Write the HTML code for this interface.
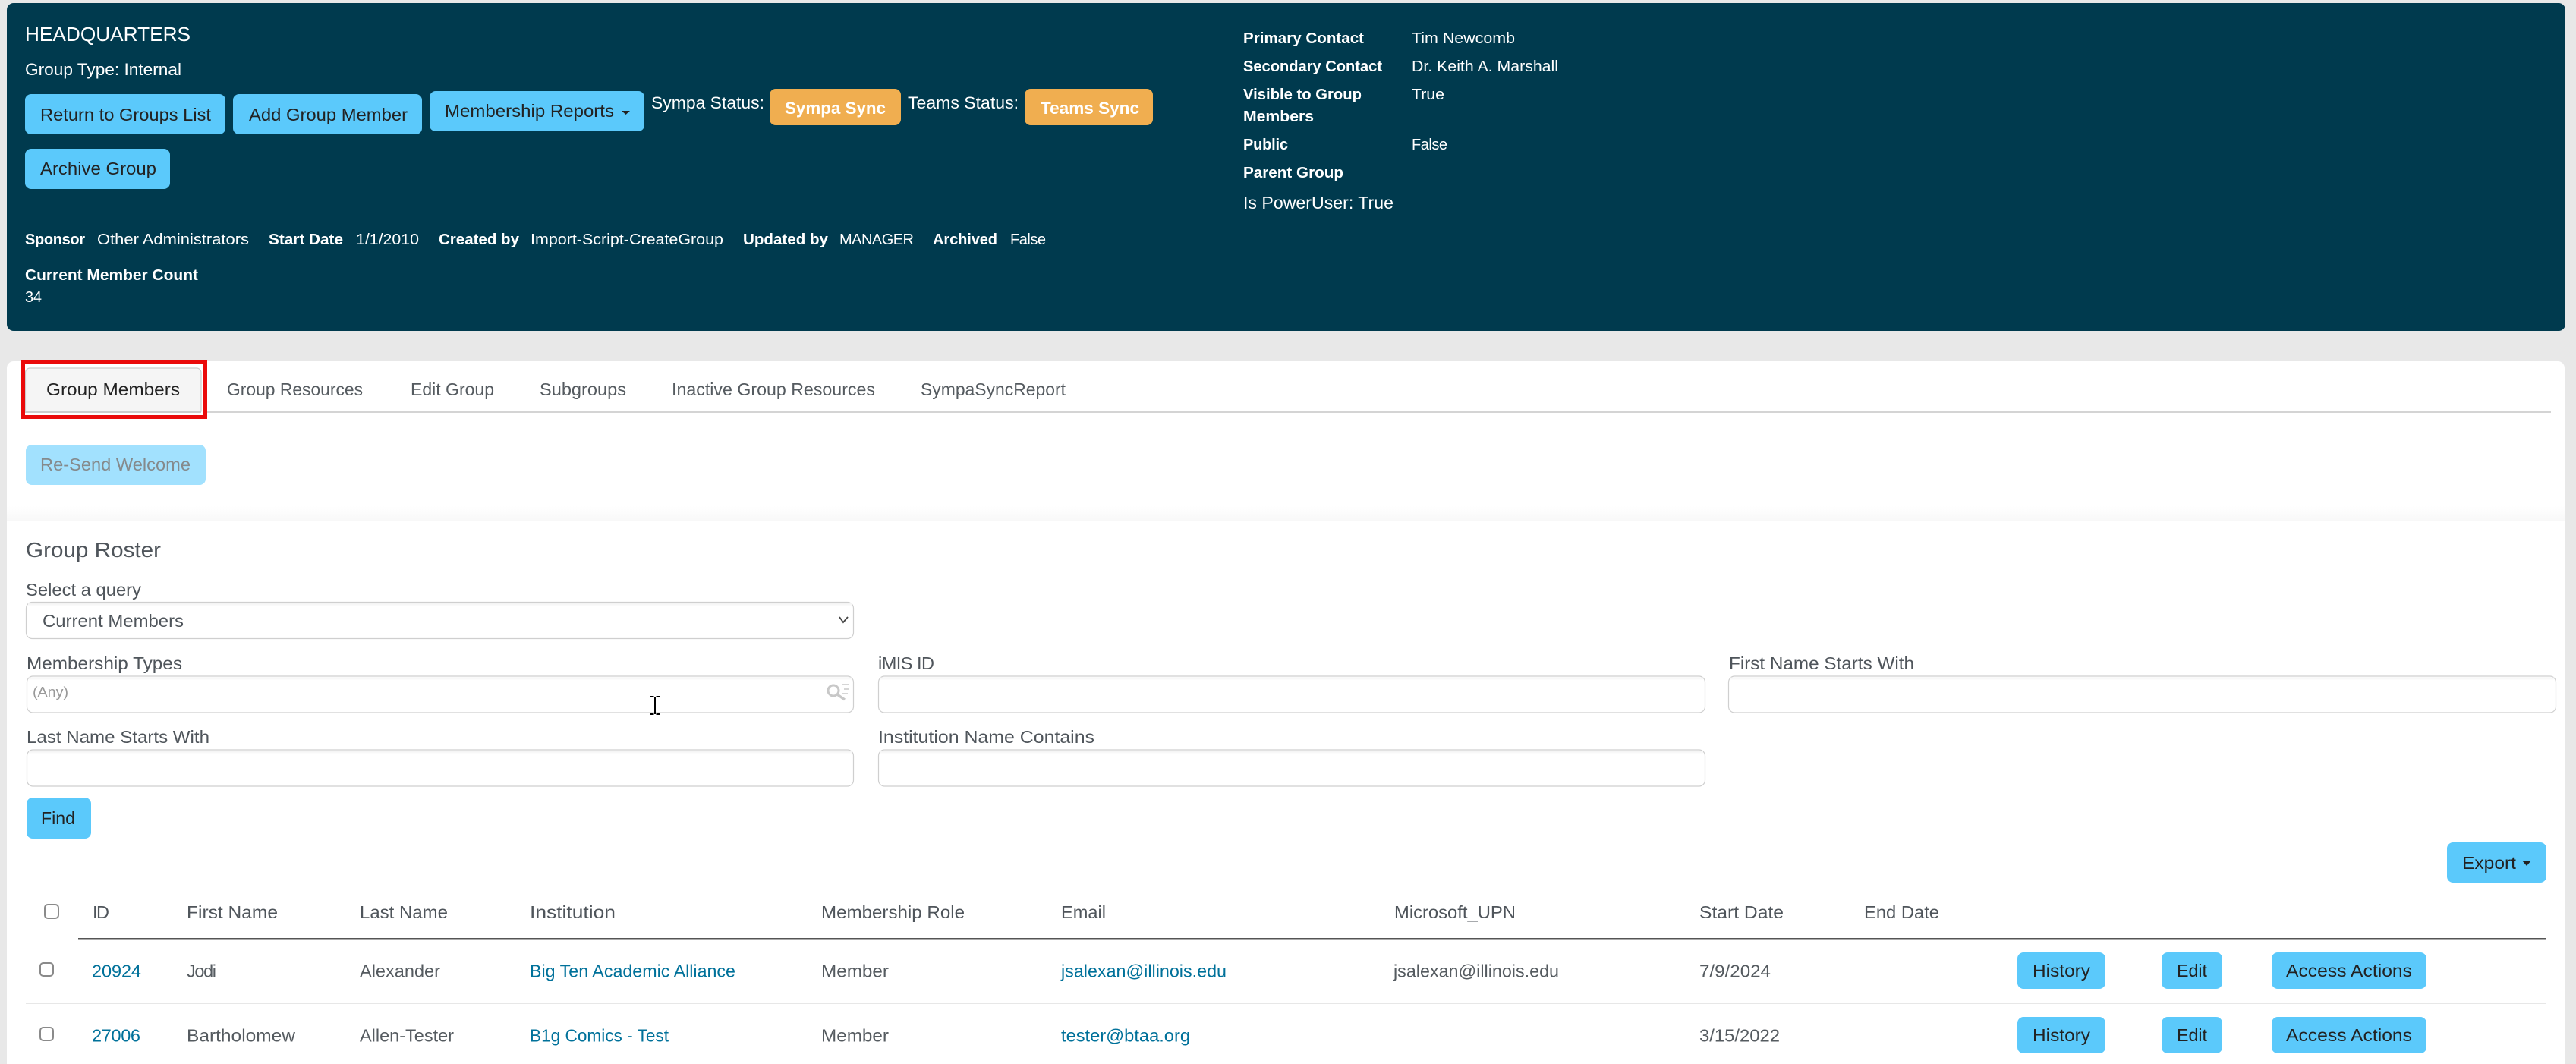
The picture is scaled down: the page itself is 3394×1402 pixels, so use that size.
<!DOCTYPE html>
<html lang="en">
<head>
<meta charset="utf-8">
<title>Headquarters - Group Members</title>
<style>
html,body{margin:0;padding:0;background:#e8e8e8;width:3394px;height:1402px;overflow:hidden}
svg{display:block}
text{font-family:"Liberation Sans",sans-serif;font-size:23.5px;fill:#555b60}
.w{fill:#fff;font-size:22.5px}
.m{font-size:20px;fill:#fff}
.b{font-size:20px;fill:#fff;font-weight:bold}
.k{fill:#222;font-size:23px}
.o{fill:#fff;font-weight:bold;font-size:22px}
.l{fill:#4f555b}
.h{fill:#4f555b}
.a{fill:#00719a}
.d{fill:#555b60}
.btn{fill:#5bc9fb}
.org{fill:#f0ae50}
.inp{fill:#fff;stroke:#cfcfcf;stroke-width:1.2}
.cb{fill:#fff;stroke:#8a8a8a;stroke-width:2}
</style>
</head>
<body>
<svg xmlns="http://www.w3.org/2000/svg" width="3394" height="1402" viewBox="0 0 3394 1402">
<defs>
<linearGradient id="fade" x1="0" y1="0" x2="0" y2="1"><stop offset="0" stop-color="#fff"/><stop offset="1" stop-color="#f8f8f8"/></linearGradient>
<linearGradient id="ins" x1="0" y1="0" x2="0" y2="1"><stop offset="0" stop-color="#f2f2f2"/><stop offset="1" stop-color="#fff"/></linearGradient>
</defs>
<rect width="3394" height="1402" fill="#e8e8e8"/>

<!-- Header -->
<rect x="9" y="4" width="3371" height="432" rx="9" fill="#003a4e"/>
<text class="w" x="33" y="54" style="font-size:26px" textLength="218" lengthAdjust="spacingAndGlyphs">HEADQUARTERS</text>
<text class="w" x="33" y="99" textLength="206" lengthAdjust="spacingAndGlyphs">Group Type: Internal</text>

<rect class="btn" x="33" y="124" width="264" height="53" rx="8"/>
<text class="k" x="53" y="159" textLength="225" lengthAdjust="spacingAndGlyphs">Return to Groups List</text>
<rect class="btn" x="307" y="124" width="249" height="53" rx="8"/>
<text class="k" x="328" y="159" textLength="209" lengthAdjust="spacingAndGlyphs">Add Group Member</text>
<rect class="btn" x="566" y="120" width="283" height="53" rx="8"/>
<text class="k" x="586" y="154" textLength="223" lengthAdjust="spacingAndGlyphs">Membership Reports</text>
<polygon points="819,146 830,146 824.500,151" fill="#222"/>
<text class="w" x="858" y="143" textLength="149" lengthAdjust="spacingAndGlyphs">Sympa Status:</text>
<rect class="org" x="1014" y="117" width="173" height="48" rx="8"/>
<text class="o" x="1034" y="150" textLength="133" lengthAdjust="spacingAndGlyphs">Sympa Sync</text>
<text class="w" x="1196" y="143" textLength="146" lengthAdjust="spacingAndGlyphs">Teams Status:</text>
<rect class="org" x="1350" y="117" width="169" height="48" rx="8"/>
<text class="o" x="1371" y="150" textLength="130" lengthAdjust="spacingAndGlyphs">Teams Sync</text>
<rect class="btn" x="33" y="196" width="191" height="53" rx="8"/>
<text class="k" x="53" y="230" textLength="153" lengthAdjust="spacingAndGlyphs">Archive Group</text>

<text class="b" x="33" y="322" textLength="79" lengthAdjust="spacing">Sponsor</text>
<text class="m" x="128" y="322" textLength="200" lengthAdjust="spacingAndGlyphs">Other Administrators</text>
<text class="b" x="354" y="322" textLength="98" lengthAdjust="spacingAndGlyphs">Start Date</text>
<text class="m" x="469" y="322" textLength="83" lengthAdjust="spacingAndGlyphs">1/1/2010</text>
<text class="b" x="578" y="322" textLength="106" lengthAdjust="spacingAndGlyphs">Created by</text>
<text class="m" x="699" y="322" textLength="254" lengthAdjust="spacingAndGlyphs">Import-Script-CreateGroup</text>
<text class="b" x="979" y="322" textLength="112" lengthAdjust="spacingAndGlyphs">Updated by</text>
<text class="m" x="1106" y="322" textLength="98" lengthAdjust="spacing">MANAGER</text>
<text class="b" x="1229" y="322" textLength="85" lengthAdjust="spacing">Archived</text>
<text class="m" x="1331" y="322" textLength="47" lengthAdjust="spacing">False</text>
<text class="b" x="33" y="369" textLength="228" lengthAdjust="spacingAndGlyphs">Current Member Count</text>
<text class="m" x="33" y="398" textLength="22" lengthAdjust="spacing">34</text>

<text class="b" x="1638" y="57" textLength="159" lengthAdjust="spacingAndGlyphs">Primary Contact</text>
<text class="m" x="1860" y="57" textLength="136" lengthAdjust="spacingAndGlyphs">Tim Newcomb</text>
<text class="b" x="1638" y="94" textLength="183" lengthAdjust="spacingAndGlyphs">Secondary Contact</text>
<text class="m" x="1860" y="94" textLength="193" lengthAdjust="spacingAndGlyphs">Dr. Keith A. Marshall</text>
<text class="b" x="1638" y="131" textLength="156" lengthAdjust="spacingAndGlyphs">Visible to Group</text>
<text class="m" x="1860" y="131" textLength="43" lengthAdjust="spacingAndGlyphs">True</text>
<text class="b" x="1638" y="160" textLength="93" lengthAdjust="spacingAndGlyphs">Members</text>
<text class="b" x="1638" y="197" textLength="59" lengthAdjust="spacing">Public</text>
<text class="m" x="1860" y="197" textLength="47" lengthAdjust="spacing">False</text>
<text class="b" x="1638" y="234" textLength="132" lengthAdjust="spacingAndGlyphs">Parent Group</text>
<text class="w" x="1638" y="275" style="font-size:23px" textLength="198" lengthAdjust="spacingAndGlyphs">Is PowerUser: True</text>

<!-- Main panel -->
<rect x="9" y="476" width="3370" height="960" rx="9" fill="#fff"/>
<rect x="9" y="667" width="3370" height="20" fill="url(#fade)"/>

<!-- Tabs -->
<rect x="273" y="542" width="3088" height="2" fill="#d4d4d4"/>
<path d="M33.500 542V491a6 6 0 0 1 6-6H259a6 6 0 0 1 6 6V542Z" fill="#f5f5f5" stroke="#ccc" stroke-width="1.200"/>
<rect x="33" y="542" width="232" height="2" fill="#ccc"/>
<rect x="30.500" y="477.500" width="240" height="72" fill="none" stroke="#ea0a0a" stroke-width="5"/>
<text class="k" style="font-size:23.5px" x="61" y="521" textLength="176" lengthAdjust="spacingAndGlyphs">Group Members</text>
<text class="d" x="299" y="521" textLength="179" lengthAdjust="spacingAndGlyphs">Group Resources</text>
<text class="d" x="541" y="521" textLength="110" lengthAdjust="spacingAndGlyphs">Edit Group</text>
<text class="d" x="711" y="521" textLength="114" lengthAdjust="spacingAndGlyphs">Subgroups</text>
<text class="d" x="885" y="521" textLength="268" lengthAdjust="spacingAndGlyphs">Inactive Group Resources</text>
<text class="d" x="1213" y="521" textLength="191" lengthAdjust="spacingAndGlyphs">SympaSyncReport</text>

<rect x="34" y="586" width="237" height="53" rx="8" fill="#a2e1fe"/>
<text x="53" y="620" style="fill:#858a8c;font-size:23px" textLength="198" lengthAdjust="spacingAndGlyphs">Re-Send Welcome</text>

<!-- Roster -->
<text class="l" x="34" y="734" style="font-size:28px" textLength="178" lengthAdjust="spacingAndGlyphs">Group Roster</text>
<text class="l" x="34" y="785" textLength="152" lengthAdjust="spacingAndGlyphs">Select a query</text>
<rect class="inp" x="34.500" y="793.500" width="1090" height="48" rx="8"/>
<rect x="37" y="795" width="1085" height="4" fill="url(#ins)"/>
<text class="l" x="56" y="826" textLength="186" lengthAdjust="spacingAndGlyphs">Current Members</text>
<polyline points="1106,813 1111,820 1117,813" fill="none" stroke="#444" stroke-width="1.800"/>

<text class="l" x="35" y="882" textLength="205" lengthAdjust="spacingAndGlyphs">Membership Types</text>
<rect class="inp" x="35.500" y="891" width="1089" height="48" rx="8"/>
<rect x="38" y="892.500" width="1084" height="4" fill="url(#ins)"/>
<text x="43" y="918" style="font-size:18.5px;fill:#999" textLength="47" lengthAdjust="spacingAndGlyphs">(Any)</text>
<g fill="none" stroke="#c8c8c8">
<circle cx="1098" cy="910" r="7" stroke-width="3"/>
<line x1="1103" y1="915" x2="1113" y2="922" stroke-width="3.500"/>
<line x1="1110" y1="902" x2="1119" y2="902" stroke-width="1.500"/>
<line x1="1112" y1="908" x2="1118" y2="908" stroke-width="1.500"/>
<line x1="1110" y1="914" x2="1117" y2="914" stroke-width="1.500"/>
</g>

<text class="l" x="1157" y="882" textLength="74" lengthAdjust="spacing">iMIS ID</text>
<rect class="inp" x="1157.500" y="891" width="1089" height="48" rx="8"/>
<rect x="1160" y="892.500" width="1084" height="4" fill="url(#ins)"/>
<text class="l" x="2278" y="882" textLength="244" lengthAdjust="spacingAndGlyphs">First Name Starts With</text>
<rect class="inp" x="2277.500" y="891" width="1090" height="48" rx="8"/>
<rect x="2280" y="892.500" width="1085" height="4" fill="url(#ins)"/>

<text class="l" x="35" y="979" textLength="241" lengthAdjust="spacingAndGlyphs">Last Name Starts With</text>
<rect class="inp" x="35.500" y="988" width="1089" height="48" rx="8"/>
<rect x="38" y="989.500" width="1084" height="4" fill="url(#ins)"/>
<text class="l" x="1157" y="979" textLength="285" lengthAdjust="spacingAndGlyphs">Institution Name Contains</text>
<rect class="inp" x="1157.500" y="988" width="1089" height="48" rx="8"/>
<rect x="1160" y="989.500" width="1084" height="4" fill="url(#ins)"/>

<rect class="btn" x="35" y="1051" width="85" height="54" rx="8"/>
<text class="k" x="54" y="1086" textLength="45" lengthAdjust="spacingAndGlyphs">Find</text>

<!-- I-beam cursor -->
<path d="M856.500 918H861.500M864.500 918H869.500M863 918V941M856.500 941H861.500M864.500 941H869.500" fill="none" stroke="#000" stroke-width="2"/>

<rect class="btn" x="3224" y="1110" width="131" height="53" rx="8"/>
<text class="k" x="3244" y="1145" textLength="71" lengthAdjust="spacingAndGlyphs">Export</text>
<polygon points="3323,1134 3335,1134 3329,1141" fill="#222"/>

<!-- Table head -->
<rect class="cb" x="59" y="1192" width="18" height="18" rx="4"/>
<text class="h" x="122" y="1210" textLength="22" lengthAdjust="spacing">ID</text>
<text class="h" x="246" y="1210" textLength="120" lengthAdjust="spacingAndGlyphs">First Name</text>
<text class="h" x="474" y="1210" textLength="116" lengthAdjust="spacingAndGlyphs">Last Name</text>
<text class="h" x="698" y="1210" textLength="113" lengthAdjust="spacingAndGlyphs">Institution</text>
<text class="h" x="1082" y="1210" textLength="189" lengthAdjust="spacingAndGlyphs">Membership Role</text>
<text class="h" x="1398" y="1210" textLength="59" lengthAdjust="spacingAndGlyphs">Email</text>
<text class="h" x="1837" y="1210" textLength="160" lengthAdjust="spacingAndGlyphs">Microsoft_UPN</text>
<text class="h" x="2239" y="1210" textLength="111" lengthAdjust="spacingAndGlyphs">Start Date</text>
<text class="h" x="2456" y="1210" textLength="99" lengthAdjust="spacingAndGlyphs">End Date</text>
<rect x="103" y="1236" width="3252" height="1.500" fill="#555"/>

<!-- Row 1 -->
<rect class="cb" x="53" y="1269" width="17" height="17" rx="4"/>
<text class="a" x="121" y="1287.500" textLength="65" lengthAdjust="spacing">20924</text>
<text class="d" x="246" y="1287.500" textLength="39" lengthAdjust="spacing">Jodi</text>
<text class="d" x="474" y="1287.500" textLength="106" lengthAdjust="spacingAndGlyphs">Alexander</text>
<text class="a" x="698" y="1287.500" textLength="271" lengthAdjust="spacingAndGlyphs">Big Ten Academic Alliance</text>
<text class="d" x="1082" y="1287.500" textLength="89" lengthAdjust="spacingAndGlyphs">Member</text>
<text class="a" x="1398" y="1287.500" textLength="218" lengthAdjust="spacingAndGlyphs">jsalexan@illinois.edu</text>
<text class="d" x="1836" y="1287.500" textLength="218" lengthAdjust="spacingAndGlyphs">jsalexan@illinois.edu</text>
<text class="d" x="2239" y="1287.500" textLength="94" lengthAdjust="spacingAndGlyphs">7/9/2024</text>
<rect class="btn" x="2658" y="1255" width="116" height="48" rx="8"/>
<text class="k" x="2678" y="1287" textLength="76" lengthAdjust="spacingAndGlyphs">History</text>
<rect class="btn" x="2848" y="1255" width="80" height="48" rx="8"/>
<text class="k" x="2868" y="1287" textLength="40" lengthAdjust="spacingAndGlyphs">Edit</text>
<rect class="btn" x="2993" y="1255" width="204" height="48" rx="8"/>
<text class="k" x="3012" y="1287" textLength="166" lengthAdjust="spacingAndGlyphs">Access Actions</text>
<rect x="34" y="1321" width="3321" height="1.500" fill="#cfcfcf"/>

<!-- Row 2 -->
<rect class="cb" x="53" y="1354" width="17" height="17" rx="4"/>
<text class="a" x="121" y="1372.500" textLength="64" lengthAdjust="spacing">27006</text>
<text class="d" x="246" y="1372.500" textLength="143" lengthAdjust="spacingAndGlyphs">Bartholomew</text>
<text class="d" x="474" y="1372.500" textLength="124" lengthAdjust="spacingAndGlyphs">Allen-Tester</text>
<text class="a" x="698" y="1372.500" textLength="183" lengthAdjust="spacingAndGlyphs">B1g Comics - Test</text>
<text class="d" x="1082" y="1372.500" textLength="89" lengthAdjust="spacingAndGlyphs">Member</text>
<text class="a" x="1398" y="1372.500" textLength="170" lengthAdjust="spacingAndGlyphs">tester@btaa.org</text>
<text class="d" x="2239" y="1372.500" textLength="106" lengthAdjust="spacingAndGlyphs">3/15/2022</text>
<rect class="btn" x="2658" y="1340" width="116" height="48" rx="8"/>
<text class="k" x="2678" y="1372" textLength="76" lengthAdjust="spacingAndGlyphs">History</text>
<rect class="btn" x="2848" y="1340" width="80" height="48" rx="8"/>
<text class="k" x="2868" y="1372" textLength="40" lengthAdjust="spacingAndGlyphs">Edit</text>
<rect class="btn" x="2993" y="1340" width="204" height="48" rx="8"/>
<text class="k" x="3012" y="1372" textLength="166" lengthAdjust="spacingAndGlyphs">Access Actions</text>
</svg>
</body>
</html>
